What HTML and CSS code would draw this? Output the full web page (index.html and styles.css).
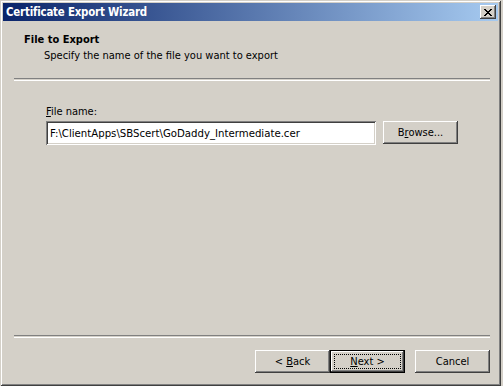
FILE: index.html
```html
<html lang="en">
<head>
    <meta charset="UTF-8">
    <title>Certificate Export Wizard</title>
    <link rel="stylesheet" href="styles.css">
</head>
<body>
    <div class="window">
        <div class="titlebar">
            <span class="title">Certificate Export Wizard</span>
            <button class="close" aria-label="Close">
                <svg width="8" height="7" viewBox="0 0 8 7" shape-rendering="crispEdges" fill="#000">
                    <rect x="0" y="0" width="2" height="1"/>
                    <rect x="6" y="0" width="2" height="1"/>
                    <rect x="1" y="1" width="2" height="1"/>
                    <rect x="5" y="1" width="2" height="1"/>
                    <rect x="2" y="2" width="4" height="1"/>
                    <rect x="3" y="3" width="2" height="1"/>
                    <rect x="2" y="4" width="4" height="1"/>
                    <rect x="1" y="5" width="2" height="1"/>
                    <rect x="5" y="5" width="2" height="1"/>
                    <rect x="0" y="6" width="2" height="1"/>
                    <rect x="6" y="6" width="2" height="1"/>
                </svg>
            </button>
        </div>
        <div class="header">
            <div class="heading">File to Export</div>
            <div class="subheading">Specify the name of the file you want to export</div>
        </div>
        <div class="separator"></div>
        <div class="content">
            <label class="label" for="filename"><u>F</u>ile name:</label>
            <div class="row">
                <input class="field" id="filename" type="text" value="F:\ClientApps\SBScert\GoDaddy_Intermediate.cer">
                <button class="btn">B<u>r</u>owse...</button>
            </div>
        </div>
        <div class="separator"></div>
        <div class="footer">
            <button class="btn">&lt; <u>B</u>ack</button>
            <button class="btn default"><span class="focus"><u>N</u>ext &gt;</span></button>
            <button class="btn cancel">Cancel</button>
        </div>
    </div>
</body>
</html>
```

FILE: styles.css
```css
html {
    background-color: #d4d0c8;
}

body {
    margin: 0;
    font-family: "DejaVu Sans Condensed", "DejaVu Sans", sans-serif;
    font-size: 11px;
    color: #000;
}

.window {
    width: 501px;
    height: 386px;
    box-sizing: border-box;
    padding: 3px;
    background-color: #d4d0c8;
    display: flex;
    flex-direction: column;
    box-shadow: inset 1px 1px #d4d0c8, inset -1px -1px #404040,
                inset 2px 2px #ffffff, inset -2px -2px #808080;
}

.titlebar {
    height: 18px;
    display: flex;
    align-items: center;
    justify-content: space-between;
    padding: 0 2px 0 3px;
    background: linear-gradient(to right, #0a246a, #a6caf0);
}

.title {
    color: #fff;
    font-weight: bold;
    font-size: 11.4px;
    letter-spacing: -0.2px;
}

.close {
    width: 16px;
    height: 14px;
    padding: 0;
    border: none;
    background-color: #d4d0c8;
    display: flex;
    align-items: center;
    justify-content: center;
    box-shadow: inset -1px -1px #404040, inset 1px 1px #ffffff,
                inset -2px -2px #808080;
}

.header {
    padding: 12px 0 16px 21px;
    line-height: 13px;
}

.heading {
    font-weight: bold;
    margin-bottom: 3px;
}

.subheading {
    padding-left: 20px;
}

.separator {
    margin: 0 8px 0 11px;
    height: 1px;
    border-top: 1px solid #808080;
    border-bottom: 1px solid #ffffff;
}

.content {
    flex: 1;
    padding: 24px 0 0 43px;
}

.label {
    display: block;
    line-height: 13px;
    margin-bottom: 3px;
}

.row {
    display: flex;
    gap: 7px;
}

.field {
    width: 330px;
    height: 24px;
    box-sizing: border-box;
    padding: 0 4px;
    margin: 0;
    border: none;
    outline: none;
    background-color: #fff;
    font-family: inherit;
    font-size: 11.3px;
    color: #000;
    box-shadow: inset 1px 1px #808080, inset -1px -1px #ffffff,
                inset 2px 2px #404040, inset -2px -2px #d4d0c8;
}

.btn {
    width: 75px;
    height: 23px;
    padding: 0;
    margin: 0;
    border: none;
    background-color: #d4d0c8;
    font-family: inherit;
    font-size: 11px;
    color: #000;
    box-shadow: inset -1px -1px #404040, inset 1px 1px #ffffff,
                inset -2px -2px #808080;
}

.footer {
    display: flex;
    justify-content: flex-end;
    padding: 12px 8px 10px 0;
}

.default {
    box-shadow: inset 0 0 0 1px #000, inset -2px -2px #404040,
                inset 2px 2px #ffffff, inset -3px -3px #808080;
    display: flex;
    padding: 4px;
}

.focus {
    flex: 1;
    display: flex;
    align-items: center;
    justify-content: center;
    outline: 1px dotted #000;
    outline-offset: -1px;
}

.cancel {
    margin-left: 10px;
}
```
